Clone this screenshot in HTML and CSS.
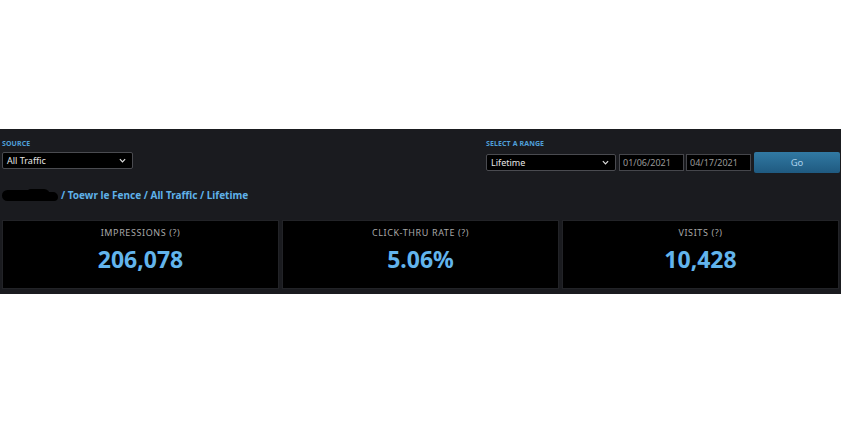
FILE: index.html
```html
<!DOCTYPE html>
<html>
<head>
<meta charset="utf-8">
<link rel="stylesheet" href="styles.css">
</head>
<body>
<div class="panel">
  <div class="toprow">
    <div class="group">
      <div class="label">Source</div>
      <div class="select wide-left"><span>All Traffic</span><svg class="chev" viewBox="0 0 8 5" width="7" height="5"><path d="M1 1 L4 4 L7 1" fill="none" stroke="#ddd" stroke-width="1.4"/></svg></div>
    </div>
    <div class="group">
      <div class="label">Select a range</div>
      <div class="range">
        <div class="select wide-right"><span>Lifetime</span><svg class="chev" viewBox="0 0 8 5" width="7" height="5"><path d="M1 1 L4 4 L7 1" fill="none" stroke="#ddd" stroke-width="1.4"/></svg></div>
        <div class="date">01/06/2021</div>
        <div class="date second">04/17/2021</div>
        <div class="go">Go</div>
      </div>
    </div>
  </div>
  <div class="crumbs"><span class="blob"><span class="b1"></span><span class="b2"></span><span class="b3"></span></span><span class="path">/ Toewr le Fence / All Traffic / Lifetime</span></div>
  <div class="cards">
    <div class="card"><div class="clabel">IMPRESSIONS (?)</div><div class="cvalue">206,078</div></div>
    <div class="card"><div class="clabel">CLICK-THRU RATE (?)</div><div class="cvalue">5.06%</div></div>
    <div class="card"><div class="clabel">VISITS (?)</div><div class="cvalue">10,428</div></div>
  </div>
</div>
</body>
</html>
```

FILE: styles.css
```css
html, body {
  margin: 0;
  padding: 0;
  background: #ffffff;
}
body {
  font-family: "Noto Sans", "Open Sans", sans-serif;
}
.panel {
  margin-top: 129px;
  width: 841px;
  box-sizing: border-box;
  padding: 10px 2px 5px 2px;
  background: #1a1b1f;
}
.toprow {
  display: flex;
  justify-content: space-between;
  margin-right: -1px;
}
.group {
  display: flex;
  flex-direction: column;
}
.label {
  font-size: 7px;
  line-height: 9px;
  font-weight: 700;
  text-transform: uppercase;
  color: #4f9fd8;
  letter-spacing: 0.1px;
  margin-bottom: 4px;
}
.select {
  height: 17px;
  box-sizing: border-box;
  background: #000;
  border: 1px solid #4a4b50;
  border-radius: 2px;
  color: #e6e6e6;
  font-size: 9px;
  display: flex;
  align-items: center;
  justify-content: space-between;
  padding: 0 6px 0 4px;
}
.wide-left { width: 131px; }
.wide-right { width: 130px; }
.chev { display: block; }
.range {
  display: flex;
  align-items: center;
  height: 21px;
}
.date {
  margin-left: 3px;
  width: 65px;
  height: 17px;
  box-sizing: border-box;
  background: #000;
  border: 1px solid #45464b;
  color: #9a9a9a;
  font-size: 9px;
  display: flex;
  align-items: center;
  padding-left: 3px;
}
.date.second { margin-left: 2px; }
.go {
  margin-left: 3px;
  width: 86px;
  height: 21px;
  box-sizing: border-box;
  background: linear-gradient(to bottom, #3179a3, #1f5a80);
  border-radius: 2px;
  color: #a9d0ea;
  font-size: 9.5px;
  display: flex;
  align-items: center;
  justify-content: center;
}
.crumbs {
  display: flex;
  align-items: center;
  height: 14px;
  margin-top: 15px;
  font-size: 10px;
  font-weight: 700;
  color: #5fb1e9;
}
.blob {
  position: relative;
  display: inline-block;
  width: 56px;
  height: 14px;
  margin-right: 3px;
  filter: blur(0.7px);
}
.blob span {
  position: absolute;
  background: #000;
}
.b1 { left: 0; top: 2px; width: 32px; height: 11px; border-radius: 6px 4px 5px 6px; }
.b2 { left: 24px; top: 1px; width: 24px; height: 12px; border-radius: 5px 6px 3px 4px; }
.b3 { left: 40px; top: 4px; width: 16px; height: 9px; border-radius: 3px 5px 4px 3px; }
.cards {
  display: grid;
  grid-template-columns: repeat(3, 1fr);
  gap: 3px;
  margin-top: 18px;
}
.card {
  height: 69px;
  box-sizing: border-box;
  background: #000;
  border: 1px solid #222327;
  display: flex;
  flex-direction: column;
  align-items: center;
}
.clabel {
  margin-top: 6px;
  font-size: 9px;
  line-height: 12px;
  color: #a8a8a8;
  letter-spacing: 0.6px;
}
.cvalue {
  margin-top: 4px;
  font-size: 23px;
  line-height: 32px;
  font-weight: 700;
  color: #62b4ec;
}
```
